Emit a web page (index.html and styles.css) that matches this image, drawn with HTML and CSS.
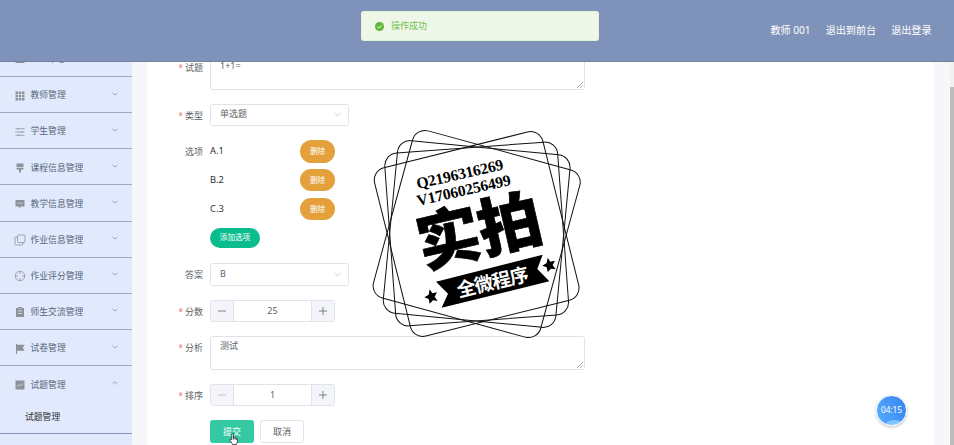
FILE: index.html
```html
<!DOCTYPE html>
<html lang="zh-CN">
<head>
<meta charset="utf-8">
<title>试题管理</title>
<link rel="stylesheet" href="styles.css">
</head>
<body>
<header class="header">
  <nav class="header-nav"><span>教师 001</span><span>退出到前台</span><span>退出登录</span></nav>
</header>

<div class="message" role="alert">
  <svg class="message-icon" viewBox="0 0 18 18"><circle cx="9" cy="9" r="9" fill="#5fb83a"/><path d="M4.8 9.2l3 3 5.4-5.6" fill="none" stroke="#fff" stroke-width="1.8"/></svg>
  <span>操作成功</span>
</div>

<div class="layout">
  <aside class="sidebar">
    <div class="menu-item">
      <svg class="menu-icon" viewBox="0 0 20 20"><path d="M1 13h18v5H1z"/></svg>
      <span class="menu-title">个人中心</span>
    </div>
    <div class="menu-item">
      <svg class="menu-icon" viewBox="0 0 20 20"><path d="M1 1h5v5H1zM7.5 1h5v5h-5zM14 1h5v5h-5zM1 7.500h5v5H1zM7.500 7.500h5v5h-5zM14 7.500h5v5h-5zM1 14h5v5H1zM7.500 14h5v5h-5zM14 14h5v5h-5z"/></svg>
      <span class="menu-title">教师管理</span>
      <svg class="chevron" viewBox="0 0 12 8"><path d="M1 1.500l5 4.500 5-4.500"/></svg>
    </div>
    <div class="menu-item">
      <svg class="menu-icon line" viewBox="0 0 20 20"><path d="M1 3.500h18M1 10h18M1 16.500h18M6 1.500v4M14 8v4M8 14.500v4"/></svg>
      <span class="menu-title">学生管理</span>
      <svg class="chevron" viewBox="0 0 12 8"><path d="M1 1.500l5 4.500 5-4.500"/></svg>
    </div>
    <div class="menu-item">
      <svg class="menu-icon" viewBox="0 0 20 20"><path d="M3 1h14v7H3zM3 9.500h14V13h-5v6H8v-6H3z"/></svg>
      <span class="menu-title">课程信息管理</span>
      <svg class="chevron" viewBox="0 0 12 8"><path d="M1 1.500l5 4.500 5-4.500"/></svg>
    </div>
    <div class="menu-item">
      <svg class="menu-icon" viewBox="0 0 20 20"><path fill-rule="evenodd" d="M1 2h18v13h-7l-4 4v-4H1zM5 7.500v2h2v-2zM9 7.500v2h2v-2zM13 7.500v2h2v-2z"/></svg>
      <span class="menu-title">教学信息管理</span>
      <svg class="chevron" viewBox="0 0 12 8"><path d="M1 1.500l5 4.500 5-4.500"/></svg>
    </div>
    <div class="menu-item">
      <svg class="menu-icon line" viewBox="0 0 20 20"><rect x="5" y="0" width="15" height="15" rx="2"/><path d="M5 4H2q-2 0-2 2v12q0 2 2 2h12q2 0 2-2v-3"/></svg>
      <span class="menu-title">作业信息管理</span>
      <svg class="chevron" viewBox="0 0 12 8"><path d="M1 1.500l5 4.500 5-4.500"/></svg>
    </div>
    <div class="menu-item">
      <svg class="menu-icon line" viewBox="0 0 20 20"><circle cx="10" cy="10" r="9.500"/><path d="M10 0v6M10 14v6M0 10h6M14 10h6"/></svg>
      <span class="menu-title">作业评分管理</span>
      <svg class="chevron" viewBox="0 0 12 8"><path d="M1 1.500l5 4.500 5-4.500"/></svg>
    </div>
    <div class="menu-item">
      <svg class="menu-icon" viewBox="0 0 20 20"><path fill-rule="evenodd" d="M2 2h4V0h8v2h4v18H2zM5.500 7v1.500h9V7zM5.500 12v1.500h9V12zM7 3v1h6V3z"/></svg>
      <span class="menu-title">师生交流管理</span>
      <svg class="chevron" viewBox="0 0 12 8"><path d="M1 1.500l5 4.500 5-4.500"/></svg>
    </div>
    <div class="menu-item">
      <svg class="menu-icon" viewBox="0 0 20 20"><path d="M2 0h2v1.500h15L15.500 7.500l3.500 6H4V20H2z"/></svg>
      <span class="menu-title">试卷管理</span>
      <svg class="chevron" viewBox="0 0 12 8"><path d="M1 1.500l5 4.500 5-4.500"/></svg>
    </div>
    <div class="menu-item open">
      <svg class="menu-icon" viewBox="0 0 20 20"><path d="M1 1h18v18H1z"/><path d="M4 13l4-4 3 3 5-5" fill="none" stroke="#e1eafc" stroke-width="1.500"/></svg>
      <span class="menu-title">试题管理</span>
      <svg class="chevron" viewBox="0 0 12 8"><path d="M1 6l5-4.500L11 6"/></svg>
    </div>
    <div class="submenu-item">试题管理</div>
  </aside>

  <main class="content">
    <form class="form">
      <div class="row">
        <span class="label required">试题</span>
        <div class="textarea">1+1=<svg class="grip" viewBox="0 0 6 6"><path d="M0 6l6-6M3 6l3-3"/></svg></div>
      </div>
      <div class="row">
        <span class="label required">类型</span>
        <div class="select"><span>单选题</span><svg class="select-arrow" viewBox="0 0 12 8"><path d="M1 1.500l5 4.500 5-4.500"/></svg></div>
      </div>
      <div class="row">
        <span class="label">选项</span>
        <div class="options">
          <div class="option"><span>A.1</span><span class="pill delete">删除</span></div>
          <div class="option"><span>B.2</span><span class="pill delete">删除</span></div>
          <div class="option"><span>C.3</span><span class="pill delete">删除</span></div>
          <span class="pill add">添加选项</span>
        </div>
      </div>
      <div class="row">
        <span class="label">答案</span>
        <div class="select"><span>B</span><svg class="select-arrow" viewBox="0 0 12 8"><path d="M1 1.500l5 4.500 5-4.500"/></svg></div>
      </div>
      <div class="row">
        <span class="label required">分数</span>
        <div class="stepper">
          <span class="step"><svg viewBox="0 0 8 8"><path d="M0 4h8"/></svg></span>
          <span class="value">25</span>
          <span class="step"><svg viewBox="0 0 8 8"><path d="M0 4h8M4 0v8"/></svg></span>
        </div>
      </div>
      <div class="row">
        <span class="label required">分析</span>
        <div class="textarea">测试<svg class="grip" viewBox="0 0 6 6"><path d="M0 6l6-6M3 6l3-3"/></svg></div>
      </div>
      <div class="row">
        <span class="label required">排序</span>
        <div class="stepper">
          <span class="step disabled"><svg viewBox="0 0 8 8"><path d="M0 4h8"/></svg></span>
          <span class="value">1</span>
          <span class="step"><svg viewBox="0 0 8 8"><path d="M0 4h8M4 0v8"/></svg></span>
        </div>
      </div>
      <div class="row">
        <span class="label"></span>
        <div class="actions">
          <span class="button primary">提交<svg class="pointer" viewBox="0 0 16 22"><path d="M5 12V2.500q0-1.700 1.500-1.700T8 2.500V8q2.500-1 3 1 2-.5 2.300 1 1.900 0 1.900 2v4l-2 5H6.500L4 17l-3-4q0-2 2-1.500z"/><path d="M8 8v4M10.800 9v3M13.200 10v3"/></svg></span>
          <span class="button">取消</span>
        </div>
      </div>
    </form>
  </main>
  <div class="scrollbar"><div class="thumb"></div></div>
</div>

<svg class="stamp" viewBox="0 0 720 675">
  <g fill="none" stroke="#111" stroke-width="3">
    <rect x="90" y="82" width="520" height="520" rx="38" transform="rotate(15.300 350 342)"/>
    <rect x="90" y="82" width="520" height="520" rx="38" transform="rotate(5.500 350 342)"/>
    <rect x="90" y="82" width="520" height="520" rx="38" transform="rotate(-4.200 350 342)"/>
    <rect x="90" y="82" width="520" height="520" rx="38" transform="rotate(-14 350 342)"/>
  </g>
  <g class="stamp-contact">
    <text transform="translate(173 207) rotate(-12.800)" textLength="266">Q2196316269</text>
    <text transform="translate(174 258) rotate(-12.800)" textLength="288">V17060256499</text>
  </g>
  <text class="stamp-title" transform="translate(189 443) rotate(-13)" textLength="378">实拍</text>
  <path d="M228 485L548 404L532 447L568 484L245 563L264 521Z"/>
  <text class="stamp-caption" transform="translate(296 532) rotate(-13.500)" textLength="220">全微程序</text>
  <path d="M209 508L217 520L231 517L224 530L233 543L219 541L209 551L206 537L193 532L206 524Z"/>
  <path transform="translate(354 -95)" d="M209 508L217 520L231 517L224 530L233 543L219 541L209 551L206 537L193 532L206 524Z"/>
</svg>

<div class="timer">04:15</div>
</body>
</html>
```
FILE: styles.css
```css
* { box-sizing: border-box; }

body {
  margin: 0;
  height: 445px;
  overflow: hidden;
  background: #f5f7fb;
  color: #606266;
  font: 9px/1.2 "Noto Sans", "Noto Sans CJK SC", sans-serif;
}

svg { display: block; }

.header {
  position: relative;
  z-index: 2;
  height: 62px;
  display: flex;
  align-items: center;
  justify-content: flex-end;
  padding: 0 22.500px 0 0;
  background: #7f93ba;
  border-bottom: 1.500px solid #74849f;
}

.header-nav {
  display: flex;
  gap: 15px;
  color: #fff;
  font-size: 10.100px;
}

.message {
  position: absolute;
  z-index: 3;
  left: 361px;
  top: 11px;
  width: 238px;
  height: 30px;
  display: flex;
  align-items: center;
  gap: 7px;
  padding-left: 13px;
  background: #eef7e8;
  border: 1px solid #e1f3d8;
  border-radius: 2.500px;
  color: #74c050;
}

.message-icon { width: 9px; height: 9px; }

.layout {
  display: flex;
  height: 383px;
}

.sidebar {
  width: 131.500px;
  height: 405px;
  margin-top: -21.200px;
  background: #e1eafc;
  flex: none;
}

.menu-item {
  height: 36.170px;
  display: flex;
  align-items: center;
  padding: 2px 13.500px 0 15px;
  border-bottom: 1.400px solid #98abc4;
  color: #56647a;
  font-size: 8.800px;
}

.menu-item.open { border-bottom: 0; }

.menu-icon {
  width: 10px;
  height: 10px;
  margin-right: 5.500px;
  fill: #8d9299;
  overflow: visible;
}

.menu-icon.line {
  fill: none;
  stroke: #8d9299;
  stroke-width: 1.600px;
}

.menu-title { flex: 1; }

.chevron {
  width: 6px;
  height: 4px;
  margin-bottom: 4px;
  fill: none;
  stroke: #8b96a8;
  stroke-width: 1.600px;
}

.submenu-item {
  height: 32px;
  padding: 10px 0 0 25px;
  border-bottom: 1.400px solid #8398b8;
  color: #303133;
  font-size: 8.800px;
}

.content {
  width: 787px;
  margin-left: 15.500px;
  background: #fff;
}

.form {
  display: flex;
  flex-direction: column;
  gap: 14px;
  margin-top: -6px;
}

.row {
  display: flex;
  align-items: flex-start;
}

.label {
  width: 56px;
  height: 22.500px;
  margin-right: 7px;
  line-height: 23.500px;
  text-align: right;
  flex: none;
}

.required::before {
  content: "*";
  margin-right: 2px;
  color: #ed6b6b;
  font-size: 8px;
}

.textarea, .select, .stepper, .button {
  border: 1px solid #e0e3ea;
  border-radius: 2.500px;
  background: #fff;
}

.textarea {
  position: relative;
  width: 375px;
  height: 33.500px;
  padding: 4px 9px;
}

.grip {
  position: absolute;
  right: 1px;
  bottom: 1px;
  width: 6px;
  height: 6px;
  fill: none;
  stroke: #999;
  stroke-width: .8px;
}

.select {
  width: 139px;
  height: 22.500px;
  display: flex;
  align-items: center;
  justify-content: space-between;
  padding: 0 7.500px 0 9px;
}

.select-arrow {
  width: 7px;
  height: 5px;
  fill: none;
  stroke: #b9bdc6;
  stroke-width: 1.400px;
}

.options {
  width: 125px;
  height: 109.300px;
  color: #303133;
}

.option {
  height: 28.800px;
  display: flex;
  align-items: flex-start;
  justify-content: space-between;
  font-size: 9.400px;
  line-height: 22.500px;
}

.pill {
  display: flex;
  align-items: center;
  justify-content: center;
  border-radius: 12px;
  color: #fff;
  font-size: 7.600px;
}

.delete { width: 35px; height: 22.500px; background: #e3a03b; }

.add { width: 50px; height: 20px; margin-top: 1.500px; background: #09bd8e; }

.stepper {
  width: 125px;
  height: 22.500px;
  display: flex;
  overflow: hidden;
}

.step {
  width: 22px;
  display: flex;
  align-items: center;
  justify-content: center;
  background: #f3f5fa;
}

.step svg {
  width: 8px;
  height: 8px;
  stroke: #606266;
  stroke-width: .8px;
}

.step.disabled svg { stroke: #b4b8c0; }

.value {
  flex: 1;
  border: solid #e0e3ea;
  border-width: 0 1px;
  line-height: 20.500px;
  text-align: center;
}

.actions { display: flex; gap: 6px; }

.button {
  position: relative;
  width: 44px;
  height: 22.500px;
  line-height: 21.500px;
  text-align: center;
}

.primary {
  background: #34c9a2;
  border-color: #34c9a2;
  color: #fff;
}

.pointer {
  position: absolute;
  left: 17.500px;
  top: 12px;
  width: 9px;
  height: 12px;
  fill: #fff;
  stroke: #222;
  stroke-width: 1.400px;
}

.scrollbar {
  width: 4.500px;
  margin-left: auto;
  padding-top: 25px;
  background: #f1f1f1;
}

.thumb { height: 358px; background: #bcbcbc; }

.stamp {
  position: absolute;
  z-index: 1;
  left: 360px;
  top: 120px;
  width: 240px;
  height: 225px;
}

.stamp-contact { font: bold 47px "Liberation Serif", serif; }

.stamp-title {
  font: 900 190px "Noto Sans CJK SC", sans-serif;
  stroke: #000;
  stroke-width: 2px;
}

.stamp-caption {
  font: bold 57px "Noto Sans CJK SC", sans-serif;
  fill: #fff;
}

.timer {
  position: absolute;
  left: 876px;
  top: 395px;
  width: 31px;
  height: 31px;
  border: 1.500px solid #eef6ff;
  border-radius: 50%;
  background: radial-gradient(circle at 60% 135%, #82c4ff 0 34%, transparent 36%), linear-gradient(65deg, #59acff, #3484ee);
  box-shadow: 0 1px 3px rgba(0, 0, 0, .25);
  color: #fff;
  font-size: 8.300px;
  line-height: 28px;
  text-align: center;
}
```
